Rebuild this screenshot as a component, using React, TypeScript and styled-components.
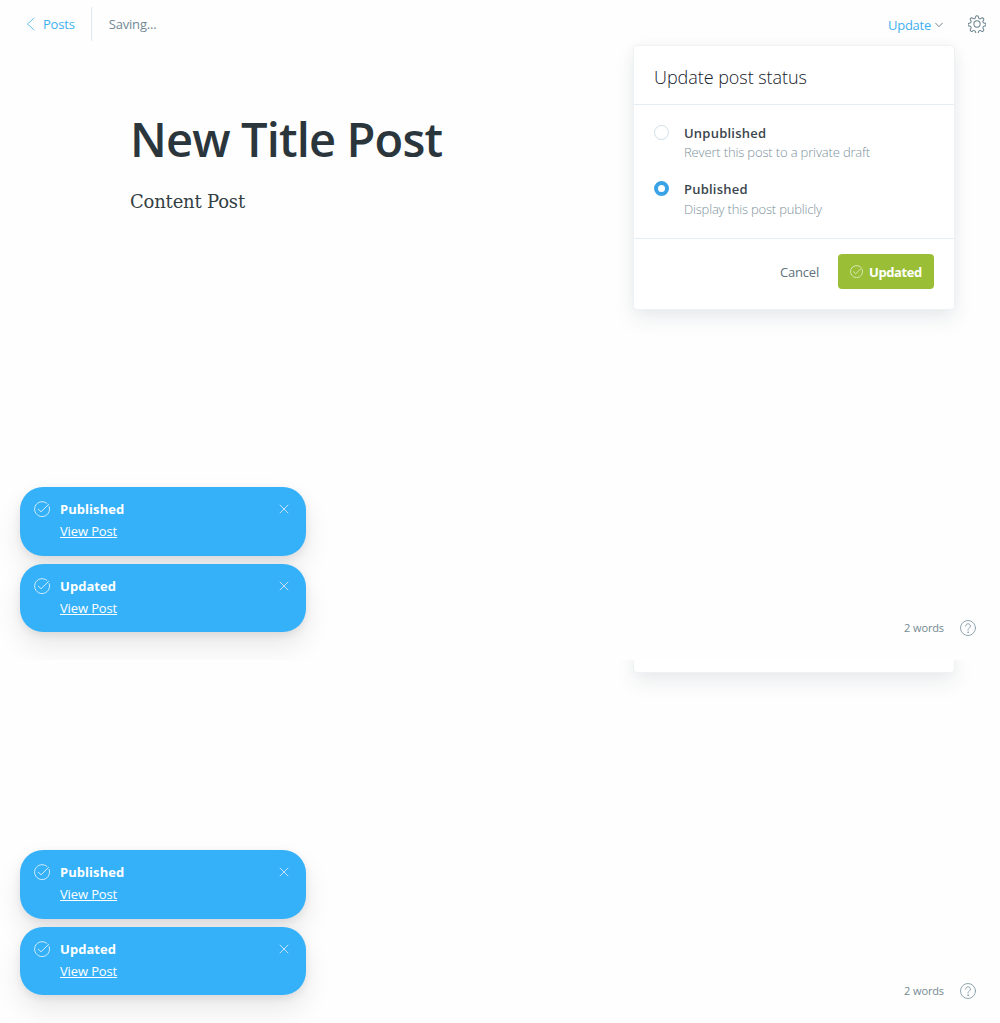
import React from "react";
import styled, { createGlobalStyle, css } from "styled-components";

const GlobalStyle = createGlobalStyle`
  * { box-sizing: border-box; }
  body { margin: 0; background: #fff; }
`;

const Page = styled.div`
  width: 1000px;
  height: 1023px;
  display: flex;
  flex-direction: column;
  background: #fefefe;
  font-family: "Open Sans", "Noto Sans", sans-serif;
  font-size: 13px;
  color: #738a94;
`;

const Screen = styled.section<{ $height: number }>`
  position: relative;
  flex: none;
  height: ${(p) => p.$height}px;
  display: flex;
  flex-direction: column;
  overflow: hidden;
`;

const Header = styled.header`
  height: 48px;
  padding: 7px 14px 7px 26px;
  display: flex;
  align-items: center;
`;

const BackLink = styled.a`
  height: 34px;
  padding-right: 16px;
  display: flex;
  align-items: center;
  gap: 8px;
  border-right: 1px solid #dfe9f1;
  color: #3eb0ef;
  letter-spacing: -0.2px;
`;

const SaveState = styled.span`
  margin-left: 17px;
  letter-spacing: -0.17px;
`;

const UpdateTrigger = styled.button`
  margin: 2px 0 0 auto;
  padding: 0;
  display: flex;
  align-items: center;
  gap: 4px;
  border: 0;
  background: none;
  font: inherit;
  color: #3eb0ef;
  letter-spacing: -0.25px;
`;

const SettingsButton = styled.button`
  margin-left: 25px;
  padding: 0;
  display: flex;
  border: 0;
  background: none;
`;

const Editor = styled.main`
  padding: 59px 130px 0;
  display: flex;
  flex-direction: column;
  align-items: flex-start;
`;

const Title = styled.h1`
  margin: 0;
  font-size: 47px;
  line-height: 64px;
  font-weight: 600;
  letter-spacing: -0.85px;
  color: #2b363c;
  white-space: nowrap;
`;

const Content = styled.p`
  margin: 16px 0 0;
  font-family: "DejaVu Serif", serif;
  font-size: 18px;
  line-height: 30px;
  letter-spacing: -0.2px;
  color: #343f44;
  white-space: nowrap;
`;

const cardShell = css`
  background: #fff;
  border: 1px solid #eef2f4;
  border-radius: 4px;
  box-shadow: 0 10px 20px rgba(30, 50, 60, 0.08), 0 0 14px rgba(30, 50, 60, 0.035);
`;

const Menu = styled.div`
  ${cardShell}
  position: absolute;
  top: 45px;
  left: 633px;
  width: 322px;
  height: 265px;
  display: flex;
  flex-direction: column;
`;

const MenuTail = styled.div`
  ${cardShell}
  flex: none;
  width: 322px;
  height: 24px;
  margin: -11px 0 0 633px;
`;

const MenuHeader = styled.header`
  height: 59px;
  padding: 4px 20px 0;
  display: flex;
  align-items: center;
  border-bottom: 1px solid #e3edf3;
  font-size: 18px;
  font-weight: 300;
  letter-spacing: -0.05px;
  color: #15212a;
`;

const Options = styled.div`
  height: 134px;
  padding: 18px 20px 0;
  display: flex;
  flex-direction: column;
  gap: 17px;
  border-bottom: 1px solid #e3edf3;
`;

const Option = styled.label`
  display: flex;
  gap: 15px;
`;

const Radio = styled.span<{ $checked?: boolean }>`
  flex: none;
  width: 15px;
  height: 15px;
  margin-top: 2px;
  border: ${(p) => (p.$checked ? "4.5px solid #3aa3e6" : "1px solid #cfdfe9")};
  border-radius: 50%;
  background: #fff;
`;

const OptionText = styled.span<{ $gap?: number }>`
  display: flex;
  flex-direction: column;
  gap: ${(p) => p.$gap ?? 0}px;
`;

const OptionName = styled.strong`
  font-weight: 600;
  line-height: 20px;
  letter-spacing: 0.22px;
  color: #3a464d;
`;

const OptionHint = styled.span<{ $spacing: number }>`
  font-weight: 300;
  line-height: 19px;
  color: #7d919b;
  letter-spacing: ${(p) => p.$spacing}px;
`;

const MenuFooter = styled.footer`
  padding: 15px 20px;
  display: flex;
  align-items: center;
  justify-content: flex-end;
  gap: 19px;
`;

const CancelButton = styled.button`
  padding: 0;
  border: 0;
  background: none;
  font: inherit;
  letter-spacing: -0.2px;
  color: #5e727b;
`;

const UpdatedButton = styled.button`
  width: 96px;
  height: 35px;
  padding: 0 0 0 12px;
  display: flex;
  align-items: center;
  gap: 6px;
  border: 0;
  border-radius: 4px;
  background: #9abf37;
  color: #fff;
  font: 700 13px/20px "Open Sans", sans-serif;
  letter-spacing: -0.4px;
`;

const ToastStack = styled.div`
  position: absolute;
  left: 20px;
  bottom: 28px;
  width: 286px;
  display: flex;
  flex-direction: column;
  gap: 8px;
`;

const Toast = styled.article<{ $height: number }>`
  height: ${(p) => p.$height}px;
  padding: 12px 17px 0 14px;
  display: flex;
  align-items: flex-start;
  gap: 10px;
  border-radius: 23px;
  background: #35b1f9;
  box-shadow: 0 14px 28px rgba(0, 0, 0, 0.09), 0 3px 9px rgba(0, 0, 0, 0.08);
  color: #fff;
  svg { margin-top: 2px; flex: none; }
`;

const ToastBody = styled.div`
  flex: 1;
  display: flex;
  flex-direction: column;
  align-items: flex-start;
`;

const ToastTitle = styled.strong`
  font-weight: 700;
  line-height: 20px;
  letter-spacing: 0.05px;
`;

const ToastLink = styled.a`
  margin-top: 2px;
  line-height: 20px;
  letter-spacing: -0.13px;
  text-decoration: underline;
  text-underline-offset: 1px;
  text-decoration-skip-ink: none;
`;

const StatusBar = styled.div`
  margin: auto 24px 24px auto;
  display: flex;
  align-items: center;
  gap: 16px;
  font-size: 11px;
  line-height: 16px;
  letter-spacing: -0.12px;
`;

const line = { fill: "none", stroke: "currentColor", strokeLinecap: "round", strokeLinejoin: "round" } as const;

const BackIcon = () => (
  <svg width="9" height="14" viewBox="0 0 9 14" {...line} strokeWidth="0.8">
    <path d="M8 1.2 1.5 7 8 12.8" />
  </svg>
);

const ChevronIcon = () => (
  <svg width="8" height="6" viewBox="0 0 8 6" {...line} stroke="#657b86" strokeWidth="0.9">
    <path d="M.5 1 4 4.7 7.5 1" />
  </svg>
);

const GearIcon = () => (
  <svg width="18" height="18" viewBox="0 0 24 24" {...line} stroke="#6b838e" strokeWidth="1.35">
    <circle cx="12" cy="12" r="4.2" />
    <path d="M13.77 2.2a1.85 1.85 0 0 0-3.54 0l-.46 1.53a1.85 1.85 0 0 1-2.65 1.1l-1.4-.75a1.85 1.85 0 0 0-2.5 2.5l.75 1.4a1.85 1.85 0 0 1-1.1 2.65l-1.53.46a1.85 1.85 0 0 0 0 3.54l1.53.46a1.85 1.85 0 0 1 1.1 2.65l-.75 1.4a1.85 1.85 0 0 0 2.5 2.5l1.4-.75a1.85 1.85 0 0 1 2.65 1.1l.46 1.53a1.85 1.85 0 0 0 3.54 0l.46-1.53a1.85 1.85 0 0 1 2.65-1.1l1.4.75a1.85 1.85 0 0 0 2.5-2.5l-.75-1.4a1.85 1.85 0 0 1 1.1-2.65l1.53-.46a1.85 1.85 0 0 0 0-3.54l-1.53-.46a1.85 1.85 0 0 1-1.1-2.65l.75-1.4a1.85 1.85 0 0 0-2.5-2.5l-1.4.75a1.85 1.85 0 0 1-2.65-1.1Z" />
  </svg>
);

const CheckIcon = ({ size }: { size: number }) => (
  <svg width={size} height={size} viewBox="0 0 16 16" {...line} strokeWidth="0.85" opacity="0.9">
    <path d="M15.2 5.6A7.5 7.5 0 1 1 12.9 2.3" />
    <path d="M4.3 8.2 7 10.8 14.6 3.4" />
  </svg>
);

const CloseIcon = () => (
  <svg width="10" height="16" viewBox="0 0 10 16" {...line} stroke="#d6e8f3" strokeWidth="0.9">
    <path d="m1 4 8 8M9 4l-8 8" />
  </svg>
);

const HelpIcon = () => (
  <svg width="16" height="16" viewBox="0 0 16 16" {...line} stroke="#7f97a3" strokeWidth="0.85">
    <circle cx="8" cy="8" r="7.5" />
    <path d="M5.6 6.1a2.4 2.4 0 1 1 3.7 2C8.4 8.6 8 9 8 10.2" />
    <circle cx="8" cy="12.2" r=".35" />
  </svg>
);

const Notifications = () => (
  <ToastStack>
    {["Published", "Updated"].map((name, i) => (
      <Toast key={name} $height={i === 0 ? 69 : 68}>
        <CheckIcon size={16} />
        <ToastBody>
          <ToastTitle>{name}</ToastTitle>
          <ToastLink>View Post</ToastLink>
        </ToastBody>
        <CloseIcon />
      </Toast>
    ))}
  </ToastStack>
);

const WordCount = () => (
  <StatusBar>
    <span>2 words</span>
    <HelpIcon />
  </StatusBar>
);

export default function App() {
  return (
    <>
      <GlobalStyle />
      <Page>
        <Screen $height={660}>
          <Header>
            <BackLink>
              <BackIcon />
              Posts
            </BackLink>
            <SaveState>Saving...</SaveState>
            <UpdateTrigger>
              Update
              <ChevronIcon />
            </UpdateTrigger>
            <SettingsButton aria-label="Settings">
              <GearIcon />
            </SettingsButton>
          </Header>
          <Editor>
            <Title>New Title Post</Title>
            <Content>Content Post</Content>
          </Editor>
          <Menu>
            <MenuHeader>Update post status</MenuHeader>
            <Options>
              <Option>
                <Radio />
                <OptionText>
                  <OptionName>Unpublished</OptionName>
                  <OptionHint $spacing={-0.15}>Revert this post to a private draft</OptionHint>
                </OptionText>
              </Option>
              <Option>
                <Radio $checked />
                <OptionText $gap={1}>
                  <OptionName>Published</OptionName>
                  <OptionHint $spacing={-0.19}>Display this post publicly</OptionHint>
                </OptionText>
              </Option>
            </Options>
            <MenuFooter>
              <CancelButton>Cancel</CancelButton>
              <UpdatedButton>
                <CheckIcon size={13} />
                Updated
              </UpdatedButton>
            </MenuFooter>
          </Menu>
          <Notifications />
          <WordCount />
        </Screen>
        <Screen $height={363}>
          <MenuTail />
          <Notifications />
          <WordCount />
        </Screen>
      </Page>
    </>
  );
}
